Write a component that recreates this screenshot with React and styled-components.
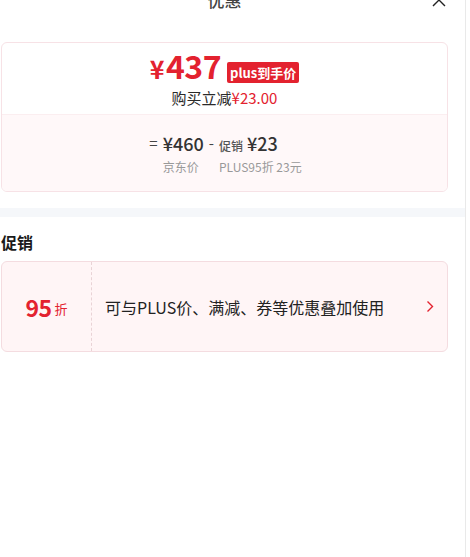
import React from 'react';
import styled, { createGlobalStyle } from 'styled-components';

const Global = createGlobalStyle`
  html, body { margin: 0; padding: 0; background: #fff; }
  body {
    font-family: "Noto Sans CJK SC", "Noto Sans", sans-serif;
    color: #1a1a1a;
    -webkit-font-smoothing: antialiased;
  }
`;

const RED = '#e3222f';

const Panel = styled.div`
  width: 465px;
  min-height: 557px;
  border-right: 1px solid #e9e9e9;
  overflow: hidden;
`;

const Section = styled.div`
  padding-right: 17px;
  padding-left: 1px;
`;

const Header = styled.header`
  height: 28px;
  margin-top: -14px;
  display: grid;
  grid-template-columns: 1fr auto 1fr;
  align-items: center;
`;

const Title = styled.h1`
  grid-column: 2;
  margin: 0;
  font-size: 17px;
  line-height: 28px;
  font-weight: 500;
  color: #444;
`;

const Close = styled.button`
  grid-column: 3;
  justify-self: end;
  margin-right: 2px;
  width: 14px;
  height: 14px;
  padding: 0;
  border: 0;
  background: none;
  display: flex;
  svg { display: block; }
`;

const PriceCard = styled.div`
  margin-top: 28px;
  border: 1px solid #f7e2e6;
  border-radius: 6px;
  overflow: hidden;
  background: #fff;
`;

const PriceTop = styled.div`
  height: 71px;
  display: flex;
  flex-direction: column;
  align-items: center;
  border-bottom: 1px solid #fbeef0;
`;

const PriceRow = styled.div`
  margin-top: 8px;
  height: 34px;
  display: flex;
  align-items: flex-end;
`;

const Big = styled.span`
  color: ${RED};
  font-weight: 700;
  font-size: 32px;
  line-height: 34px;
  letter-spacing: -0.5px;
`;

const Yen = styled.span`
  font-size: 25px;
  margin-right: 2px;
`;

const Badge = styled.span`
  margin: 0 0 2px 6px;
  height: 21px;
  padding: 0 3px;
  background: ${RED};
  color: #fff;
  border-radius: 2px;
  font-size: 13px;
  font-weight: 700;
  line-height: 21px;
`;

const SaveRow = styled.div`
  margin-top: 3px;
  font-size: 15px;
  line-height: 20px;
  color: #2a2a2a;
`;

const Red = styled.span`
  color: ${RED};
`;

const PriceBottom = styled.div`
  height: 76px;
  background: #fff8f9;
  display: grid;
  grid-template-columns: repeat(4, auto);
  grid-template-rows: 24px 18px;
  column-gap: 5px;
  row-gap: 3px;
  justify-content: center;
  align-content: start;
  padding-top: 16px;
  box-sizing: border-box;
`;

const Op = styled.span`
  font-size: 15px;
  line-height: 24px;
  color: #444;
  padding-left: ${p => (p.$first ? '2px' : '0')};
`;

const Amount = styled.span`
  font-size: 18px;
  line-height: 24px;
  font-weight: 500;
  color: #333;
`;

const Tag = styled.span`
  font-size: 12px;
  color: #555;
  margin-right: 4px;
`;

const Caption = styled.span`
  grid-column: ${p => p.$col};
  font-size: 12px;
  line-height: 18px;
  color: #999;
`;

const Band = styled.div`
  margin-top: 16px;
  height: 9px;
  background: #f5f7fa;
`;

const Heading = styled.h2`
  margin: 14px 0 0;
  font-size: 16px;
  line-height: 22px;
  font-weight: 700;
  color: #1a1a1a;
`;

const PromoCard = styled.div`
  margin-top: 8px;
  height: 91px;
  box-sizing: border-box;
  border: 1px solid #f4dce0;
  border-radius: 6px;
  background: #fff5f6;
  display: flex;
  align-items: stretch;
`;

const Discount = styled.div`
  width: 89px;
  flex: none;
  border-right: 1px dashed #e9d3d6;
  display: flex;
  align-items: center;
  justify-content: center;
  color: ${RED};
`;

const DiscountNum = styled.span`
  font-size: 23px;
  font-weight: 700;
  letter-spacing: -0.5px;
`;

const DiscountUnit = styled.span`
  font-size: 13px;
  margin-left: 3px;
  margin-top: 3px;
`;

const PromoText = styled.div`
  flex: 1;
  display: flex;
  align-items: center;
  padding-left: 13px;
  font-size: 16px;
  color: #222;
`;

const Arrow = styled.div`
  display: flex;
  align-items: center;
  padding-right: 13px;
`;

export default function App() {
  return (
    <>
      <Global />
      <Panel>
        <Section>
          <Header>
            <Title>优惠</Title>
            <Close aria-label="关闭">
              <svg width="14" height="14" viewBox="0 0 14 14">
                <path d="M1 1L13 13M13 1L1 13" stroke="#222" strokeWidth="1.4" fill="none" />
              </svg>
            </Close>
          </Header>
          <PriceCard>
            <PriceTop>
              <PriceRow>
                <Big><Yen>¥</Yen>437</Big>
                <Badge>plus到手价</Badge>
              </PriceRow>
              <SaveRow>
                购买立减<Red>¥23.00</Red>
              </SaveRow>
            </PriceTop>
            <PriceBottom>
              <Op $first>=</Op>
              <Amount>¥460</Amount>
              <Op>-</Op>
              <Amount><Tag>促销</Tag>¥23</Amount>
              <Caption $col={2}>京东价</Caption>
              <Caption $col={4}>PLUS95折 23元</Caption>
            </PriceBottom>
          </PriceCard>
        </Section>
        <Band />
        <Section>
          <Heading>促销</Heading>
          <PromoCard>
            <Discount>
              <DiscountNum>95</DiscountNum>
              <DiscountUnit>折</DiscountUnit>
            </Discount>
            <PromoText>可与PLUS价、满减、券等优惠叠加使用</PromoText>
            <Arrow>
              <svg width="8" height="13" viewBox="0 0 8 13">
                <path d="M1.5 1.5L6.5 6.5L1.5 11.5" stroke={RED} strokeWidth="1.4" fill="none" />
              </svg>
            </Arrow>
          </PromoCard>
        </Section>
      </Panel>
    </>
  );
}
